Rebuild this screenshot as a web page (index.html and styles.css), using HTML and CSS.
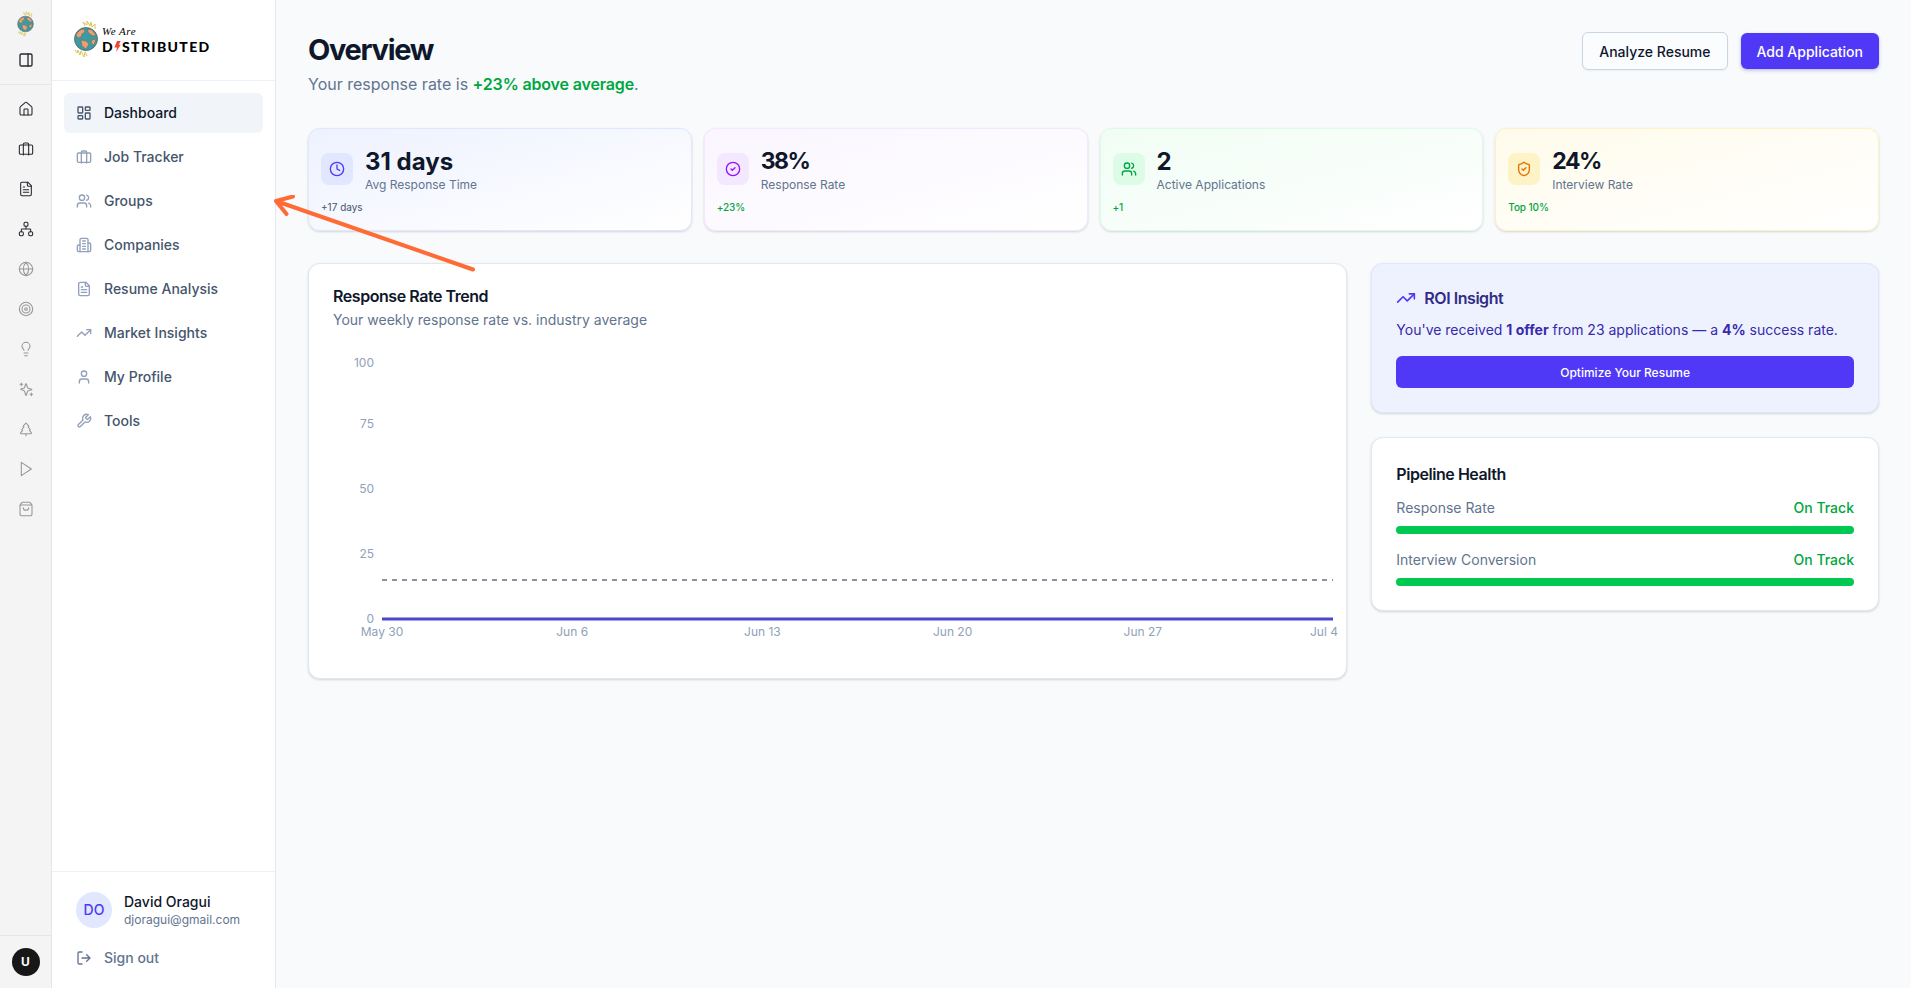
FILE: index.html
```html
<!DOCTYPE html>
<html lang="en">
<head>
    <meta charset="UTF-8">
    <meta name="viewport" content="width=device-width, initial-scale=1.0">
    <title>Overview</title>
    <link rel="stylesheet" href="styles.css">
</head>
<body>
<!-- icon sprite -->
<svg class="sprite" aria-hidden="true">
    <symbol id="panel" viewBox="0 0 24 24"><rect x="3" y="3" width="18" height="18" rx="2"/><path d="M15 3v18"/></symbol>
    <symbol id="home" viewBox="0 0 24 24"><path d="M15 21v-8a1 1 0 0 0-1-1h-4a1 1 0 0 0-1 1v8"/><path d="M3 10a2 2 0 0 1 .709-1.528l7-6a2 2 0 0 1 2.582 0l7 6A2 2 0 0 1 21 10v9a2 2 0 0 1-2 2H5a2 2 0 0 1-2-2z"/></symbol>
    <symbol id="briefcase" viewBox="0 0 24 24"><path d="M8 21V5a2 2 0 0 1 2-2h4a2 2 0 0 1 2 2v16"/><rect x="2" y="6" width="20" height="14" rx="2"/></symbol>
    <symbol id="file" viewBox="0 0 24 24"><path d="M15 2H6a2 2 0 0 0-2 2v16a2 2 0 0 0 2 2h12a2 2 0 0 0 2-2V7Z"/><path d="M14 2v4a2 2 0 0 0 2 2h4M10 9H8M16 13H8M16 17H8"/></symbol>
    <symbol id="network" viewBox="0 0 24 24"><rect x="16" y="16" width="6" height="6" rx="2"/><rect x="2" y="16" width="6" height="6" rx="2"/><rect x="9" y="2" width="6" height="6" rx="2"/><path d="M5 16v-3a1 1 0 0 1 1-1h12a1 1 0 0 1 1 1v3M12 12V8"/></symbol>
    <symbol id="globe" viewBox="0 0 24 24"><circle cx="12" cy="12" r="10"/><path d="M12 2a14.5 14.5 0 0 0 0 20 14.5 14.5 0 0 0 0-20M2 12h20"/></symbol>
    <symbol id="target" viewBox="0 0 24 24"><circle cx="12" cy="12" r="10"/><circle cx="12" cy="12" r="6"/><circle cx="12" cy="12" r="2"/></symbol>
    <symbol id="bulb" viewBox="0 0 24 24"><path d="M15 14c.2-1 .7-1.7 1.5-2.5 1-.9 1.5-2.2 1.5-3.5A6 6 0 0 0 6 8c0 1 .2 2.2 1.5 3.5.7.7 1.3 1.5 1.5 2.5M9 18h6M10 22h4"/></symbol>
    <symbol id="sparkles" viewBox="0 0 24 24"><path d="M9.900 15.500A2 2 0 0 0 8.500 14.100l-4-1.200a.5.5 0 0 1 0-.9l4-1.200A2 2 0 0 0 9.900 9.400l1.600-4.900a.5.5 0 0 1 1 0l1.600 4.900a2 2 0 0 0 1.400 1.400l4.900 1.500a.5.5 0 0 1 0 .9l-4.900 1.500a2 2 0 0 0-1.400 1.400l-1.600 4.900a.5.5 0 0 1-1 0z"/><path d="M5 3v4M3 5h4M20 18v4M18 20h4"/></symbol>
    <symbol id="tree" viewBox="0 0 24 24"><path d="m17 14 3 3.300a1 1 0 0 1-.7 1.700H4.700a1 1 0 0 1-.7-1.700L7 14h-.3a1 1 0 0 1-.7-1.700L9 9h-.2A1 1 0 0 1 8 7.300L12 3l4 4.300a1 1 0 0 1-.8 1.700H15l3 3.300a1 1 0 0 1-.7 1.700H17ZM12 22v-3"/></symbol>
    <symbol id="play" viewBox="0 0 24 24"><path d="M5 2l15 10-15 10z"/></symbol>
    <symbol id="bag" viewBox="0 0 24 24"><path d="M3.400 5.500A2 2 0 0 0 3 6.700V20a2 2 0 0 0 2 2h14a2 2 0 0 0 2-2V6.700a2 2 0 0 0-.4-1.200l-2-2.700A2 2 0 0 0 17 2H7a2 2 0 0 0-1.600.8zM3.100 6h17.800M16 10a4 4 0 0 1-8 0"/></symbol>
    <symbol id="dashboard" viewBox="0 0 24 24"><rect x="3" y="3" width="7" height="9" rx="1"/><rect x="14" y="3" width="7" height="5" rx="1"/><rect x="14" y="12" width="7" height="9" rx="1"/><rect x="3" y="16" width="7" height="5" rx="1"/></symbol>
    <symbol id="users" viewBox="0 0 24 24"><path d="M16 21v-2a4 4 0 0 0-4-4H6a4 4 0 0 0-4 4v2"/><circle cx="9" cy="7" r="4"/><path d="M22 21v-2a4 4 0 0 0-3-3.870M16 3.130a4 4 0 0 1 0 7.750"/></symbol>
    <symbol id="building" viewBox="0 0 24 24"><path d="M6 22V4a2 2 0 0 1 2-2h8a2 2 0 0 1 2 2v18Z"/><path d="M6 12H4a2 2 0 0 0-2 2v6a2 2 0 0 0 2 2h2M18 9h2a2 2 0 0 1 2 2v9a2 2 0 0 1-2 2h-2M10 6h4M10 10h4M10 14h4M10 18h4"/></symbol>
    <symbol id="trend" viewBox="0 0 24 24"><path d="m22 7-8.500 8.500-5-5L2 17"/><path d="M16 7h6v6"/></symbol>
    <symbol id="user" viewBox="0 0 24 24"><path d="M19 21v-2a4 4 0 0 0-4-4H9a4 4 0 0 0-4 4v2"/><circle cx="12" cy="7" r="4"/></symbol>
    <symbol id="wrench" viewBox="0 0 24 24"><path d="M14.700 6.300a1 1 0 0 0 0 1.400l1.600 1.600a1 1 0 0 0 1.400 0l3.770-3.770a6 6 0 0 1-7.940 7.940l-6.910 6.910a2.120 2.120 0 0 1-3-3l6.910-6.910a6 6 0 0 1 7.940-7.940l-3.760 3.760z"/></symbol>
    <symbol id="logout" viewBox="0 0 24 24"><path d="M9 21H5a2 2 0 0 1-2-2V5a2 2 0 0 1 2-2h4M16 17l5-5-5-5M21 12H9"/></symbol>
    <symbol id="clock" viewBox="0 0 24 24"><circle cx="12" cy="12" r="10"/><path d="M12 6v6l4 2"/></symbol>
    <symbol id="check" viewBox="0 0 24 24"><circle cx="12" cy="12" r="10"/><path d="m9 12 2 2 4-4"/></symbol>
    <symbol id="shield" viewBox="0 0 24 24"><path d="M20 13c0 5-3.500 7.500-7.660 8.950a1 1 0 0 1-.67-.01C7.500 20.500 4 18 4 13V6a1 1 0 0 1 1-1c2 0 4.500-1.200 6.240-2.720a1.170 1.170 0 0 1 1.520 0C14.510 3.810 17 5 19 5a1 1 0 0 1 1 1z"/><path d="m9 12 2 2 4-4"/></symbol>
    <symbol id="earth" viewBox="0 0 24 38">
        <path d="M11 6 9 2l4 3 0-4 3 5 1-4 1 5 3-3 0 5M1 30l2 3 1-3 2 5 1-4 3 6 1-5 2 4" fill="none" stroke="#d9c64e" stroke-width="1"/>
        <circle cx="12" cy="19" r="11.500" fill="#3c9aa0" stroke="#56616b" stroke-width=".8"/>
        <path d="M2 15c2-4 5-6 8-6l1 3-3 2-1 3-3 1zM14 9l4 1 4 5-3 1-3-2-2-2zM7 20l5 1 3 3-3 5-4-3zM18 20l4-1-2 6-3-2z" fill="#e7a176" stroke="#775e50" stroke-width=".5"/>
    </symbol>
</svg>

<div class="app">
    <aside class="rail">
        <div class="rail-top">
            <svg class="rail-logo"><use href="#earth"/></svg>
            <svg class="icon"><use href="#panel"/></svg>
        </div>
        <nav class="rail-nav">
            <svg class="icon"><use href="#home"/></svg>
            <svg class="icon"><use href="#briefcase"/></svg>
            <svg class="icon"><use href="#file"/></svg>
            <svg class="icon"><use href="#network"/></svg>
            <svg class="icon muted"><use href="#globe"/></svg>
            <svg class="icon muted"><use href="#target"/></svg>
            <svg class="icon muted"><use href="#bulb"/></svg>
            <svg class="icon muted"><use href="#sparkles"/></svg>
            <svg class="icon muted"><use href="#tree"/></svg>
            <svg class="icon muted"><use href="#play"/></svg>
            <svg class="icon muted"><use href="#bag"/></svg>
        </nav>
        <div class="rail-user"><span>U</span></div>
    </aside>

    <aside class="sidebar">
        <div class="brand">
            <svg class="brand-globe"><use href="#earth"/></svg>
            <div class="brand-text">
                <div class="brand-small">We Are</div>
                <div class="brand-name">D<svg class="bolt" viewBox="0 0 7 12"><path d="M3 0h4L5 4h2L2 12l1-5H0z"/></svg>STRIBUTED</div>
            </div>
        </div>
        <nav class="menu">
            <a class="menu-item active"><svg class="icon"><use href="#dashboard"/></svg>Dashboard</a>
            <a class="menu-item"><svg class="icon"><use href="#briefcase"/></svg>Job Tracker</a>
            <a class="menu-item"><svg class="icon"><use href="#users"/></svg>Groups</a>
            <a class="menu-item"><svg class="icon"><use href="#building"/></svg>Companies</a>
            <a class="menu-item"><svg class="icon"><use href="#file"/></svg>Resume Analysis</a>
            <a class="menu-item"><svg class="icon"><use href="#trend"/></svg>Market Insights</a>
            <a class="menu-item"><svg class="icon"><use href="#user"/></svg>My Profile</a>
            <a class="menu-item"><svg class="icon"><use href="#wrench"/></svg>Tools</a>
        </nav>
        <div class="account">
            <div class="account-row">
                <div class="avatar">DO</div>
                <div>
                    <div class="account-name">David Oragui</div>
                    <div class="account-mail">djoragui@gmail.com</div>
                </div>
            </div>
            <a class="signout"><svg class="icon"><use href="#logout"/></svg>Sign out</a>
        </div>
    </aside>

    <main class="main">
        <header class="header">
            <div>
                <h1>Overview</h1>
                <p class="lead">Your response rate is <strong>+23% above average</strong>.</p>
            </div>
            <div class="actions">
                <button class="btn btn-outline">Analyze Resume</button>
                <button class="btn btn-primary">Add Application</button>
            </div>
        </header>

        <section class="stats">
            <div class="stat indigo">
                <div class="stat-row">
                    <div class="stat-icon"><svg class="icon"><use href="#clock"/></svg></div>
                    <div>
                        <div class="stat-value">31 days</div>
                        <div class="stat-label">Avg Response Time</div>
                    </div>
                </div>
                <div class="stat-change neutral">+17 days</div>
            </div>
            <div class="stat purple">
                <div class="stat-row">
                    <div class="stat-icon"><svg class="icon"><use href="#check"/></svg></div>
                    <div>
                        <div class="stat-value percent">38%</div>
                        <div class="stat-label">Response Rate</div>
                    </div>
                </div>
                <div class="stat-change">+23%</div>
            </div>
            <div class="stat green">
                <div class="stat-row">
                    <div class="stat-icon"><svg class="icon"><use href="#users"/></svg></div>
                    <div>
                        <div class="stat-value">2</div>
                        <div class="stat-label">Active Applications</div>
                    </div>
                </div>
                <div class="stat-change">+1</div>
            </div>
            <div class="stat amber">
                <div class="stat-row">
                    <div class="stat-icon"><svg class="icon"><use href="#shield"/></svg></div>
                    <div>
                        <div class="stat-value percent">24%</div>
                        <div class="stat-label">Interview Rate</div>
                    </div>
                </div>
                <div class="stat-change">Top 10%</div>
            </div>
        </section>

        <section class="panels">
            <div class="card trend">
                <h3>Response Rate Trend</h3>
                <p class="sub">Your weekly response rate vs. industry average</p>
                <svg class="chart" viewBox="0 0 1010 300">
                    <g class="axis-y">
                        <text x="41" y="21">100</text>
                        <text x="41" y="82">75</text>
                        <text x="41" y="147">50</text>
                        <text x="41" y="212">25</text>
                        <text x="41" y="277">0</text>
                    </g>
                    <path class="average" d="M49 234H1000"/>
                    <path class="rate" d="M49 273H1000"/>
                    <g class="axis-x">
                        <text x="49" y="290">May 30</text>
                        <text x="239.2" y="290">Jun 6</text>
                        <text x="429.4" y="290">Jun 13</text>
                        <text x="619.6" y="290">Jun 20</text>
                        <text x="809.8" y="290">Jun 27</text>
                        <text x="991" y="290">Jul 4</text>
                    </g>
                </svg>
            </div>

            <div class="side">
                <div class="card roi">
                    <h3><svg class="icon"><use href="#trend"/></svg>ROI Insight</h3>
                    <p>You've received <b>1 offer</b> from 23 applications — a <b>4%</b> success rate.</p>
                    <button class="btn-wide">Optimize Your Resume</button>
                </div>
                <div class="card health">
                    <h3>Pipeline Health</h3>
                    <div class="metric">
                        <div class="metric-row"><span>Response Rate</span><span class="ok">On Track</span></div>
                        <div class="bar"></div>
                    </div>
                    <div class="metric">
                        <div class="metric-row"><span>Interview Conversion</span><span class="ok">On Track</span></div>
                        <div class="bar"></div>
                    </div>
                </div>
            </div>
        </section>
    </main>
</div>

<!-- arrow pointing at Groups -->
<svg class="arrow" viewBox="0 0 210 84"><path d="M203 74.500 6 6M23 1.500 6 6l10.500 13"/></svg>
</body>
</html>
```
FILE: styles.css
```css
* {
    box-sizing: border-box;
}
body {
    margin: 0;
    font-family: Inter, "Liberation Sans", sans-serif;
    font-size: 14px;
    line-height: 20px;
    color: #0f172a;
    background-color: #f8fafc;
    overflow: hidden;
}
h1, h3, p {
    margin: 0;
}
button {
    font-family: inherit;
}
.sprite {
    display: none;
}
.icon {
    width: 16px;
    height: 16px;
    flex: none;
    display: block;
    fill: none;
    stroke: currentColor;
    stroke-width: 2;
    stroke-linecap: round;
    stroke-linejoin: round;
}
.app {
    display: flex;
    height: 100vh;
}

/* narrow icon rail */
.rail {
    width: 52px;
    flex: none;
    display: flex;
    flex-direction: column;
    background-color: #f4f4f4;
    border-right: 1px solid #e3e5e9;
    color: #27272f;
}
.rail-top {
    height: 85px;
    display: flex;
    flex-direction: column;
    align-items: center;
    padding-top: 11px;
    gap: 15px;
    border-bottom: 1px solid #e8e8ea;
}
.rail-logo {
    width: 17px;
    height: 26px;
}
.rail-nav {
    flex: 1;
    display: flex;
    flex-direction: column;
    align-items: center;
    gap: 24px;
    padding-top: 16px;
}
.rail-nav .icon {
    stroke-width: 1.6;
}
.rail-nav .muted {
    color: #96969b;
}
.rail-user {
    height: 53px;
    display: flex;
    justify-content: center;
    align-items: center;
    border-top: 1px solid #e5e5e7;
}
.rail-user span {
    width: 28px;
    height: 28px;
    line-height: 28px;
    border-radius: 50%;
    background-color: #171717;
    color: #fff;
    font-size: 12px;
    font-weight: 700;
    text-align: center;
}

/* sidebar */
.sidebar {
    width: 224px;
    flex: none;
    display: flex;
    flex-direction: column;
    background-color: #fff;
    border-right: 1px solid #e2e8f0;
}
.brand {
    height: 81px;
    display: flex;
    padding: 19px 0 0 22px;
    gap: 4px;
    border-bottom: 1px solid #edf1f6;
}
.brand-globe {
    width: 24px;
    height: 40px;
}
.brand-text {
    color: #000;
    padding-top: 5px;
}
.brand-small {
    font-family: "Liberation Serif", serif;
    font-style: italic;
    font-size: 11px;
    line-height: 14px;
    letter-spacing: 0.5px;
}
.brand-name {
    font-family: Lato, sans-serif;
    font-weight: 900;
    font-size: 14px;
    line-height: 18px;
    letter-spacing: 1.35px;
    white-space: nowrap;
}
.bolt {
    width: 7px;
    height: 11px;
    fill: #ee4630;
    margin-right: 1px;
}
.menu {
    flex: 1;
    display: flex;
    flex-direction: column;
    gap: 4px;
    padding: 12px;
}
.menu-item {
    display: flex;
    align-items: center;
    gap: 12px;
    height: 40px;
    padding: 0 12px;
    border-radius: 6px;
    font-weight: 500;
    color: #45556c;
}
.menu-item .icon {
    color: #90a1b9;
}
.menu-item.active {
    background-color: #f1f5f9;
    color: #0f172b;
}
.menu-item.active .icon {
    color: #45556c;
}
.account {
    height: 117px;
    padding: 20px 24px;
    border-top: 1px solid #edf1f6;
}
.account-row {
    display: flex;
    align-items: center;
    gap: 12px;
}
.avatar {
    width: 36px;
    height: 36px;
    line-height: 36px;
    border-radius: 50%;
    background-color: #e0e7ff;
    color: #4f39f6;
    font-weight: 500;
    text-align: center;
}
.account-name {
    font-weight: 500;
}
.account-mail {
    font-size: 12px;
    line-height: 16px;
    color: #62748e;
}
.signout {
    display: flex;
    align-items: center;
    gap: 12px;
    margin-top: 20px;
    font-weight: 500;
    color: #62748e;
}

/* main */
.main {
    flex: 1;
    padding: 32px;
}
.header {
    display: flex;
    justify-content: space-between;
    align-items: flex-start;
    height: 96px;
}
h1 {
    font-size: 29px;
    line-height: 36px;
    font-weight: 700;
    letter-spacing: -1.3px;
}
.lead {
    margin-top: 4px;
    font-size: 16px;
    line-height: 24px;
    color: #62748e;
}
.lead strong {
    font-weight: 600;
    letter-spacing: -0.15px;
    color: #00a63e;
}
.actions {
    display: flex;
    align-items: center;
    gap: 13px;
}
.btn {
    height: 36px;
    padding: 0 16px;
    border: none;
    border-radius: 6px;
    font-size: 14px;
    font-weight: 500;
}
.btn-outline {
    height: 38px;
    padding: 0 16px;
    border: 1px solid #cad5e2;
    background-color: #fbfcfe;
    color: #0f172b;
    box-shadow: 0 1px 2px rgba(0, 0, 0, 0.05);
}
.btn-primary {
    background-color: #4f39f6;
    color: #fff;
    box-shadow: 0 1px 3px rgba(0, 0, 0, 0.15), 0 2px 4px rgba(79, 57, 246, 0.15);
}

/* stat cards */
.stats {
    display: grid;
    grid-template-columns: repeat(4, 1fr);
    gap: 12px;
}
.stat {
    height: 103px;
    padding: 16px 12px;
    border: 1px solid;
    border-radius: 12px;
    box-shadow: 0 1px 3px rgba(0, 0, 0, 0.1), 0 1px 2px rgba(0, 0, 0, 0.06);
}
.stat-row {
    display: flex;
    align-items: center;
    gap: 12px;
}
.stat-icon {
    width: 32px;
    height: 32px;
    display: flex;
    justify-content: center;
    align-items: center;
    border-radius: 8px;
}
.stat-value {
    height: 32px;
    font-size: 24px;
    line-height: 33px;
    font-weight: 700;
}
.stat-value.percent {
    font-size: 23px;
    letter-spacing: -1.5px;
}
.stat-label {
    font-size: 12px;
    line-height: 16px;
    color: #62748e;
}
.stat-change {
    margin-top: 7px;
    font-size: 10px;
    line-height: 15px;
    font-weight: 500;
    letter-spacing: -0.1px;
    color: #00a63e;
}
.stat-change.neutral {
    font-weight: 400;
    letter-spacing: 0;
    color: #45556c;
}
.indigo {
    background: linear-gradient(to bottom right, #eef2ff, #fff);
    border-color: #e0e7ff;
}
.indigo .stat-icon {
    background-color: #e0e7ff;
    color: #4f39f6;
}
.purple {
    background: linear-gradient(to bottom right, #faf5ff, #fff);
    border-color: #f3e8ff;
}
.purple .stat-icon {
    background-color: #f3e8ff;
    color: #9810fa;
}
.green {
    background: linear-gradient(to bottom right, #f0fdf4, #fff);
    border-color: #dcfce7;
}
.green .stat-icon {
    background-color: #dcfce7;
    color: #00a63e;
}
.amber {
    background: linear-gradient(to bottom right, #fffbeb, #fff);
    border-color: #fef3c6;
}
.amber .stat-icon {
    background-color: #fef3c6;
    color: #e17100;
}

/* panels */
.panels {
    display: grid;
    grid-template-columns: repeat(3, 1fr);
    gap: 24px;
    margin-top: 32px;
    align-items: start;
}
.card {
    padding: 24px;
    border: 1px solid #e2e8f0;
    border-radius: 12px;
    background-color: #fff;
    box-shadow: 0 1px 3px rgba(0, 0, 0, 0.1), 0 1px 2px rgba(0, 0, 0, 0.06);
}
.card h3 {
    font-size: 16px;
    line-height: 24px;
    font-weight: 600;
    letter-spacing: -0.45px;
}
.trend {
    grid-column: span 2;
    height: 416px;
    padding-top: 20px;
    padding-right: 0;
}
.sub {
    margin-top: 2px;
    color: #62748e;
}
.chart {
    display: block;
    width: 1010px;
    height: 300px;
    margin-top: 16px;
    font-size: 12px;
    fill: #90a1b9;
}
.axis-y {
    text-anchor: end;
}
.axis-x {
    text-anchor: middle;
}
.average {
    stroke: #8d939d;
    stroke-width: 2;
    stroke-dasharray: 5 5;
}
.rate {
    stroke: #4f46cf;
    stroke-width: 3;
}
.side {
    display: flex;
    flex-direction: column;
    gap: 24px;
}
.roi {
    background-color: #eef2ff;
    border-color: #e0e7ff;
    color: #372aac;
}
.roi h3 {
    display: flex;
    align-items: center;
    gap: 8px;
    line-height: 20px;
    color: #312c85;
}
.roi h3 .icon {
    width: 20px;
    height: 20px;
    color: #4f39f6;
}
.roi p {
    margin: 12px 0 16px;
    white-space: nowrap;
}
.roi b {
    font-weight: 700;
}
.btn-wide {
    display: block;
    width: 100%;
    height: 32px;
    border: none;
    border-radius: 6px;
    background-color: #4f39f6;
    color: #fff;
    font-size: 12px;
    font-weight: 500;
}
.metric {
    margin-top: 12px;
}
.metric + .metric {
    margin-top: 16px;
}
.metric-row {
    display: flex;
    justify-content: space-between;
    color: #62748e;
}
.ok {
    font-weight: 500;
    color: #00a63e;
}
.bar {
    height: 8px;
    margin-top: 8px;
    border-radius: 4px;
    background-color: #00c951;
}

.arrow {
    position: absolute;
    left: 270px;
    top: 195px;
    width: 210px;
    height: 84px;
    fill: none;
    stroke: #ff6b35;
    stroke-width: 4;
    stroke-linecap: round;
    stroke-linejoin: round;
}
```
